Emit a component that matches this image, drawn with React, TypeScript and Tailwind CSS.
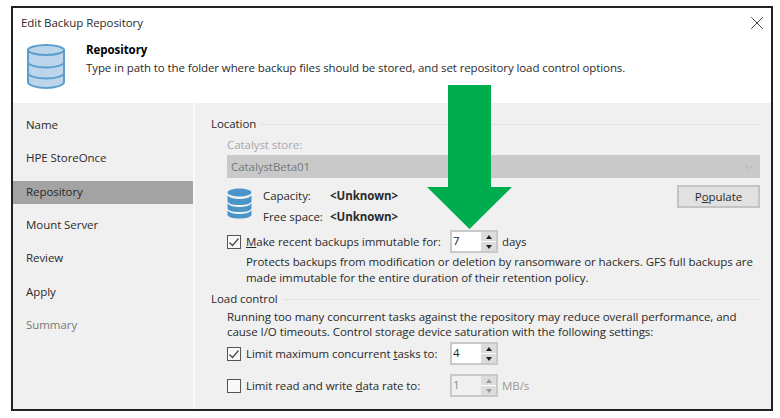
import React from 'react';
import { X, ChevronDown } from 'lucide-react';

const steps = ['Name', 'HPE StoreOnce', 'Repository', 'Mount Server', 'Review', 'Apply', 'Summary'];

const DbIcon = () => (
  <svg width="40" height="48" viewBox="0 0 40 48" className="shrink-0">
    <path d="M2 8v32c0 3 8 6 18 6s18-3 18-6V8z" fill="#bcd5ea" stroke="#5b9fcc" strokeWidth="2" />
    <ellipse cx="20" cy="8" rx="18" ry="5" fill="#bcd5ea" stroke="#5b9fcc" strokeWidth="2" />
    <path d="M2 20c0 3 8 5.500 18 5.500S38 23 38 20M2 31c0 3 8 5.500 18 5.500S38 34 38 31" fill="none" stroke="#5b9fcc" strokeWidth="2" />
  </svg>
);

const SmallDb = () => (
  <svg width="25" height="31" viewBox="0 0 25 31" className="shrink-0">
    <ellipse cx="12.500" cy="4.500" rx="12" ry="4" fill="#4a94c8" />
    <path d="M.5 7.500c2 2.500 7 3.500 12 3.500s10-1 12-3.500v5.500c0 2.500-5 4-12 4s-12-1.500-12-4z" fill="#4a94c8" />
    <path d="M.5 15.500c2 2.500 7 3.500 12 3.500s10-1 12-3.500v4.500c0 2.500-5 4-12 4s-12-1.500-12-4z" fill="#4a94c8" />
    <path d="M.5 22.500c2 2.500 7 3.500 12 3.500s10-1 12-3.500v4c0 2.500-5 4-12 4s-12-1.500-12-4z" fill="#4a94c8" />
  </svg>
);

const Checkbox = ({ checked }: { checked?: boolean }) => (
  <div className="w-[14px] h-[14px] border border-[#555] bg-[#f8f8f8] flex items-center justify-center shrink-0">
    {checked && (
      <svg width="12" height="12" viewBox="0 0 12 12">
        <path d="M1.500 6.500L4.500 9.500L10.500 2.500" fill="none" stroke="#444" strokeWidth="1.200" />
      </svg>
    )}
  </div>
);

const Spinner = ({ value, disabled }: { value: string; disabled?: boolean }) => (
  <div className={`w-[48px] h-[23px] border-2 border-[#c9c9c9] flex shrink-0 ${disabled ? 'bg-[#f0f0f0] text-[#8a8a8a]' : 'bg-white text-[#222]'}`}>
    <span className="flex-1 pl-[1px] leading-[17px]">{value}</span>
    <div className="w-[15px] flex flex-col gap-[1px] bg-white">
      <div className="flex-1 bg-[#dcdcdc] flex items-center justify-center">
        <div className={`w-0 h-0 border-x-[3px] border-x-transparent border-b-[4px] ${disabled ? 'border-b-[#999]' : 'border-b-[#222]'}`} />
      </div>
      <div className="flex-1 bg-[#dcdcdc] flex items-center justify-center">
        <div className={`w-0 h-0 border-x-[3px] border-x-transparent border-t-[4px] ${disabled ? 'border-t-[#999]' : 'border-t-[#222]'}`} />
      </div>
    </div>
  </div>
);

const SectionTitle = ({ title }: { title: string }) => (
  <div className="flex items-center gap-[5px] h-[18px]">
    <span>{title}</span>
    <div className="flex-1 h-[1px] bg-[#e2e2e2]" />
  </div>
);

export default function App() {
  return (
    <div className="relative w-[780px] h-[418px] overflow-hidden bg-white pt-[6px] pl-[11px] pr-[7px] pb-[7px] text-[11.5px] text-[#2a2a2a] font-['Open_Sans','Noto_Sans',sans-serif] tracking-[-0.06px]">
      <div className="h-full border-2 border-[#222] flex flex-col bg-white">
        {/* header */}
        <div className="h-[95px] shrink-0 relative">
          <div className="pl-[8px] pt-[6px] h-[32px] leading-[18px]">Edit Backup Repository</div>
          <div className="flex pl-[13px] gap-[20px]">
            <div className="pt-[2px]"><DbIcon /></div>
            <div>
              <div className="font-bold text-black leading-[19px]">Repository</div>
              <div className="leading-[18px] tracking-[-0.1px]">Type in path to the folder where backup files should be stored, and set repository load control options.</div>
            </div>
          </div>
          <X className="absolute right-[3px] top-[4px]" size={22} strokeWidth={1} color="#333" />
        </div>
        {/* body */}
        <div className="flex-1 flex min-h-0 bg-[#f0f0f0]">
          <div className="w-[180px] shrink-0 pt-[11px] border-r-2 border-r-[#f8f8f8] box-content">
            {steps.map(s => (
              <div
                key={s}
                className={`h-[23.300px] mb-[10px] pb-[2px] flex items-center pl-[13px] ${s === 'Repository' ? 'bg-[#a3a3a3]' : ''} ${s === 'Summary' ? 'text-[#777]' : ''}`}
              >
                {s}
              </div>
            ))}
          </div>
          <div className="flex-1 pl-[16px] pr-[11px] pt-[12px]">
            <SectionTitle title="Location" />
            <div className="pl-[16px]">
              <div className="text-[#a8a8a8] h-[19px] mt-[3px] leading-[18px]">Catalyst store:</div>
              <div className="h-[23px] bg-[#c9c9c9] flex items-center justify-between pl-[4px] pr-[4px] text-[#777]">
                <span>CatalystBeta01</span>
                <ChevronDown size={14} strokeWidth={1} color="#999" />
              </div>
              <div className="flex items-start justify-between mt-[7px] h-[45px]">
                <div className="flex gap-[11px] pt-[3px]">
                  <SmallDb />
                  <div className="leading-[21px] -mt-[3px]">
                    <div className="flex"><span className="w-[67px]">Capacity:</span><b>&lt;Unknown&gt;</b></div>
                    <div className="flex"><span className="w-[67px]">Free space:</span><b>&lt;Unknown&gt;</b></div>
                  </div>
                </div>
                <button className="w-[83px] h-[23px] border-2 border-[#c4c4c4] bg-[#e1e1e1]">
                  P<span className="underline">o</span>pulate
                </button>
              </div>
              <div className="flex items-center h-[23px]">
                <Checkbox checked />
                <span className="ml-[5px] w-[204px] whitespace-nowrap"><span className="underline">M</span>ake recent backups immutable for:</span>
                <Spinner value="7" />
                <span className="ml-[4px]">days</span>
              </div>
              <div className="pl-[19px] leading-[16px] mt-[1px] whitespace-nowrap">
                Protects backups from modification or deletion by ransomware or hackers. GFS full backups are<br />
                made immutable for the entire duration of their retention policy.
              </div>
            </div>
            <div className="mt-[4px]"><SectionTitle title="Load control" /></div>
            <div className="pl-[16px]">
              <div className="leading-[15px] mt-[1px] whitespace-nowrap">
                Running too many concurrent tasks against the repository may reduce overall performance, and<br />
                cause I/O timeouts. Control storage device saturation with the following settings:
              </div>
              <div className="flex items-center h-[23px] mt-[3px]">
                <Checkbox checked />
                <span className="ml-[5px] w-[204px] whitespace-nowrap">Limit maximum concurrent <span className="underline">t</span>asks to:</span>
                <Spinner value="4" />
              </div>
              <div className="flex items-center h-[23px] mt-[9px]">
                <Checkbox />
                <span className="ml-[5px] w-[204px] whitespace-nowrap">Limit read and write <span className="underline">d</span>ata rate to:</span>
                <Spinner value="1" disabled />
                <span className="ml-[4px] text-[#999]">MB/s</span>
              </div>
            </div>
          </div>
        </div>
      </div>
      {/* green arrow over the dialog */}
      <svg className="absolute left-[427px] top-[85px]" width="85" height="145" viewBox="0 0 85 145">
        <path d="M21 0H64V102H85L42.500 144L0 102H21Z" fill="#00ad4e" />
      </svg>
    </div>
  );
}
